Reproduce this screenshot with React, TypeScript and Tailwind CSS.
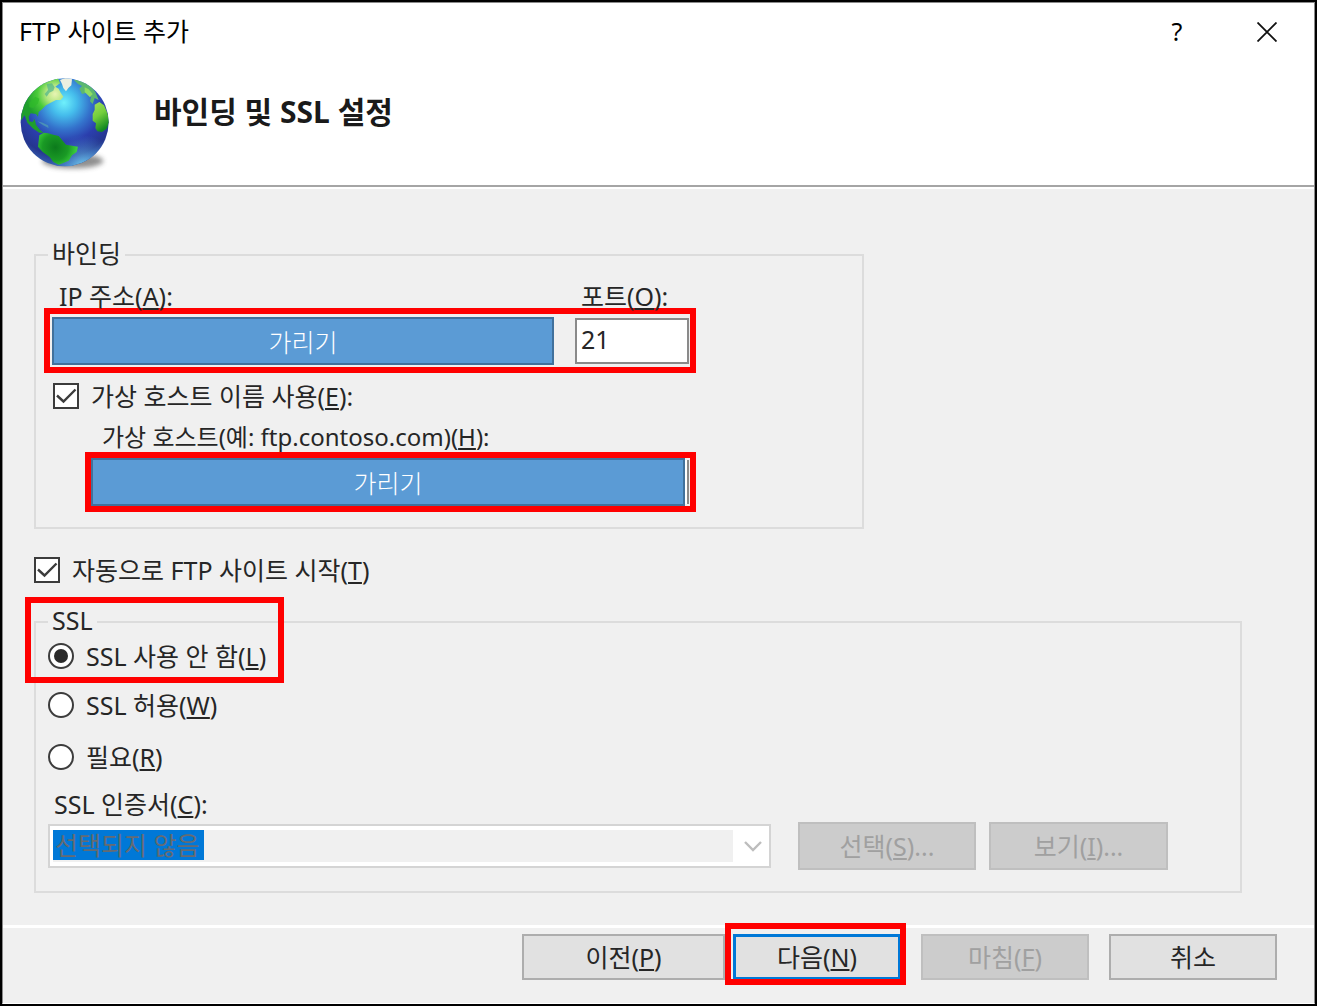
import type { ReactNode } from "react";

const boxShape = "size-[26px] shrink-0 appearance-none border-2 border-[#3c3c3c] bg-white";

function Key({ k }: { k: string }) {
  return (
    <>
      (<span className="underline decoration-2 underline-offset-2">{k}</span>)
    </>
  );
}

function Globe() {
  return (
    <svg viewBox="60 228 276 294" className="h-[98px] w-[92px] shrink-0" aria-hidden="true">
      <defs>
        <radialGradient id="sea" gradientUnits="userSpaceOnUse" cx="192" cy="308" r="190">
          <stop offset="0" stopColor="#6ff0fb" />
          <stop offset="0.2" stopColor="#45bdec" />
          <stop offset="0.42" stopColor="#3473cc" />
          <stop offset="0.62" stopColor="#2b3fae" />
          <stop offset="0.85" stopColor="#25368f" />
          <stop offset="1" stopColor="#3560b0" />
        </radialGradient>
        <radialGradient id="glow" gradientUnits="userSpaceOnUse" cx="250" cy="505" r="100">
          <stop offset="0" stopColor="#7ad8f4" stopOpacity="0.95" />
          <stop offset="1" stopColor="#4a90d8" stopOpacity="0" />
        </radialGradient>
        <radialGradient id="north" gradientUnits="userSpaceOnUse" cx="117" cy="66" r="88">
          <stop offset="0" stopColor="#e8f4b4" />
          <stop offset="0.3" stopColor="#b4e680" />
          <stop offset="0.6" stopColor="#4acb3a" />
          <stop offset="1" stopColor="#1f9e2c" />
        </radialGradient>
        <radialGradient id="south" gradientUnits="userSpaceOnUse" cx="118" cy="226" r="64">
          <stop offset="0" stopColor="#0c7a1c" />
          <stop offset="0.6" stopColor="#1a9a25" />
          <stop offset="1" stopColor="#3ccf3c" />
        </radialGradient>
        <linearGradient id="africa" x1="0" y1="0" x2="0.4" y2="1">
          <stop offset="0" stopColor="#a4e05a" />
          <stop offset="0.5" stopColor="#74cf3c" />
          <stop offset="1" stopColor="#128a22" />
        </linearGradient>
        <clipPath id="disc">
          <circle cx="194" cy="367" r="132" />
        </clipPath>
        <filter id="soft" x="-20%" y="-50%" width="140%" height="200%">
          <feGaussianBlur stdDeviation="8" />
        </filter>
      </defs>
      <ellipse cx="218" cy="483" rx="92" ry="22" fill="#444" opacity="0.6" filter="url(#soft)" />
      <circle cx="194" cy="367" r="132" fill="url(#sea)" />
      <g clipPath="url(#disc)">
        <circle cx="194" cy="367" r="132" fill="url(#glow)" />
        <g transform="translate(48 216)">
          <path
            d="M12 150 L16 100 L46 54 L90 24 L126 18 L132 34 L118 44 L128 50 L134 62 L142 74 L134 84 L120 84 L104 92 L90 100 L78 112 L68 120 L66 134 L60 126 L44 124 L38 134 L40 148 L50 150 L56 140 L60 158 L70 172 L82 182 L70 182 L52 170 L34 152 L26 130 Z"
            fill="url(#north)"
          />
          <path d="M92 36 L108 34 L116 46 L112 56 L100 62 L92 74 L86 66 L96 54 Z" fill="#4fb58c" opacity="0.7" />
          <path d="M40 92 L58 74 L70 80 L66 94 L52 108 L40 106 Z" fill="#2fbb2a" opacity="0.7" />
          <path d="M132 24 L150 17 L168 22 L166 40 L157 48 L150 58 L142 48 L138 36 Z" fill="#ecefe0" />
          <path
            d="M174 24 L196 24 L220 38 L238 60 L248 84 L236 78 L230 96 L222 88 L226 70 L212 62 L198 66 L190 50 L198 42 L186 36 Z"
            fill="#5cb870"
          />
          <path d="M206 46 L218 52 L230 66 L222 76 L206 60 Z" fill="#8fdd62" />
          <path
            d="M236 98 L250 90 L264 100 L274 122 L280 148 L272 170 L258 180 L244 178 L238 168 L240 154 L230 146 L230 126 L236 114 Z"
            fill="url(#africa)"
          />
          <path
            d="M70 190 L84 182 L96 184 L112 188 L128 192 L140 206 L150 218 L186 224 L182 240 L168 250 L158 266 L140 274 L128 278 L112 270 L100 254 L80 240 L66 224 L68 206 Z"
            fill="url(#south)"
          />
          <path d="M64 148 L80 152 L96 160 L98 168 L82 160 Z" fill="#4a90b8" />
        </g>
      </g>
    </svg>
  );
}

function Check({ id, children }: { id: string; children: ReactNode }) {
  return (
    <div className="flex h-[30px] items-center gap-3">
      <span className="relative flex">
        <input id={id} type="checkbox" defaultChecked className={`peer ${boxShape}`} />
        <svg
          viewBox="0 0 26 26"
          className="pointer-events-none absolute inset-0 hidden size-[26px] peer-checked:block"
          fill="none"
          stroke="#3c3c3c"
          strokeWidth="2.4"
        >
          <path d="M4 12.5 L10.5 18.5 L22.5 6.5" />
        </svg>
      </span>
      <label htmlFor={id}>{children}</label>
    </div>
  );
}

function Radio({ id, checked, children }: { id: string; checked?: boolean; children: ReactNode }) {
  return (
    <div className="flex h-[30px] items-center gap-3">
      <input
        id={id}
        name="ssl"
        type="radio"
        defaultChecked={checked}
        className={`${boxShape} grid place-items-center rounded-full checked:before:size-3.5 checked:before:rounded-full checked:before:bg-[#2b2b2b]`}
      />
      <label htmlFor={id}>{children}</label>
    </div>
  );
}

function Cover({ id }: { id: string }) {
  return (
    <input
      id={id}
      readOnly
      value="가리기"
      className="h-12 min-w-0 flex-1 border-2 border-[#41719c] bg-[#5b9bd5] text-center font-light text-white"
    />
  );
}

const buttonTones = {
  normal: "border-2 border-[#adadad] bg-[#e1e1e1]",
  primary: "border-3 border-[#0078d7] bg-[#e1e1e1]",
  disabled: "border-2 border-[#bfbfbf] bg-[#cccccc] text-[#a0a0a0]",
};

function Button({
  className,
  tone = "normal",
  children,
}: {
  className: string;
  tone?: keyof typeof buttonTones;
  children: ReactNode;
}) {
  return (
    <button type="button" disabled={tone === "disabled"} className={`shrink-0 ${buttonTones[tone]} ${className}`}>
      {children}
    </button>
  );
}

export default function App() {
  return (
    <div className="flex min-h-screen flex-col border-2 border-black bg-[#f0f0f0] font-['Noto_Sans','Noto_Sans_CJK_KR',sans-serif] text-[25px] leading-[30px] whitespace-nowrap text-[#262626]">
      <div className="flex flex-1 flex-col border border-[#8a8a8a] border-b-white">
        <header className="border-b-2 border-[#a5a5a5] bg-white">
          <div className="flex h-14 items-center pr-0.5 pl-4">
            <h1 className="flex-1 text-black">FTP 사이트 추가</h1>
            <button type="button" aria-label="도움말" className="w-[90px] text-black">
              ?
            </button>
            <button type="button" aria-label="닫기" className="flex w-[90px] justify-center pt-0.5">
              <svg viewBox="0 0 20 20" className="size-5" fill="none" stroke="#111" strokeWidth="1.8">
                <path d="M0.5 0.5 L19.5 19.5 M19.5 0.5 L0.5 19.5" />
              </svg>
            </button>
          </div>
          <div className="flex gap-[42px] pt-[17px] pb-[11px] pl-[17px]">
            <Globe />
            <h2 className="pt-[18px] text-[30px] leading-[36px] font-bold text-[#1a1a1a]">바인딩 및 SSL 설정</h2>
          </div>
        </header>

        <main className="flex-1 border-t-2 border-white pt-[51px] pr-[72px] pl-[31px]">
          <fieldset className="w-[830px] max-w-full border-2 border-[#dcdcdc] pb-[15px] pl-2">
            <legend className="ml-1 px-1 pb-1 leading-[26px]">바인딩</legend>
            <div className="flex w-[652px] pt-[14px] leading-6">
              <label htmlFor="ip" className="flex-1 pl-[15px]">
                IP 주소
                <Key k="A" />:
              </label>
              <label htmlFor="port" className="w-[115px]">
                포트
                <Key k="O" />:
              </label>
            </div>
            <div className="flex h-[65px] w-[652px] items-center gap-[21px] border-6 border-[#ff0000] pr-px pl-0.5">
              <Cover id="ip" />
              <input
                id="port"
                defaultValue="21"
                className="h-[46px] w-[114px] border-2 border-[#8a8a8a] bg-white pb-1 pl-1"
              />
            </div>
            <div className="mt-2 pl-[9px]">
              <Check id="vhost">
                가상 호스트 이름 사용
                <Key k="E" />:
              </Check>
            </div>
            <label htmlFor="host" className="mt-[11px] block pl-[58px] text-[24px]">
              가상 호스트(예: ftp.contoso.com)
              <Key k="H" />:
            </label>
            <div className="ml-[41px] flex h-[60px] w-[611px] items-center border-6 border-[#ff0000]">
              <Cover id="host" />
              <span className="mr-px h-11 w-[4px] border-r-2 border-[#8a8a8a] bg-white" />
            </div>
          </fieldset>

          <div className="mt-[26px]">
            <Check id="auto">
              자동으로 FTP 사이트 시작
              <Key k="T" />
            </Check>
          </div>

          <div className="relative mt-[22px]">
            <fieldset className="border-2 border-[#dcdcdc] pb-[21px] pl-3">
              <legend className="px-1 pb-1 leading-[26px]">SSL</legend>
              <div className="pt-1">
                <Radio id="none" checked>
                  SSL 사용 안 함
                  <Key k="L" />
                </Radio>
              </div>
              <div className="mt-[19px]">
                <Radio id="allow">
                  SSL 허용
                  <Key k="W" />
                </Radio>
              </div>
              <div className="mt-[22px]">
                <Radio id="require">
                  필요
                  <Key k="R" />
                </Radio>
              </div>
              <label htmlFor="cert" className="mt-[17px] block pl-1.5">
                SSL 인증서
                <Key k="C" />:
              </label>
              <div className="mt-[3px] flex items-center pr-[72px]">
                <div className="flex h-11 flex-1 items-center border-2 border-[#d4d4d4] bg-white pl-[3px]">
                  <div className="flex h-8 flex-1 bg-[#f0f0f0]">
                    <select
                      id="cert"
                      disabled
                      className="h-[30px] w-[151px] appearance-none bg-[#0078d7] pl-0.5 text-[25px] leading-[28px] text-[#666b72] opacity-100"
                    >
                      <option>선택되지 않음</option>
                    </select>
                  </div>
                  <svg viewBox="0 0 36 20" className="h-5 w-9" fill="none" stroke="#bdbdbd" strokeWidth="2.4">
                    <path d="M12 6 L20 14 L28 6" />
                  </svg>
                </div>
                <Button tone="disabled" className="ml-[27px] h-12 w-[178px]">
                  선택
                  <Key k="S" />
                  ...
                </Button>
                <Button tone="disabled" className="ml-[13px] h-12 w-[179px]">
                  보기
                  <Key k="I" />
                  ...
                </Button>
              </div>
            </fieldset>
            <span className="pointer-events-none absolute -top-2.5 -left-[9px] h-[86px] w-[259px] border-6 border-[#ff0000]" />
          </div>
        </main>

        <footer className="flex items-center justify-end border-t-3 border-white pt-1.5 pr-[37px] pb-[23px]">
          <Button className="h-[46px] w-[203px]">
            이전
            <Key k="P" />
          </Button>
          <div className="relative mr-5 ml-2">
            <Button tone="primary" className="h-[46px] w-[168px]">
              다음
              <Key k="N" />
            </Button>
            <span className="pointer-events-none absolute -top-[11px] -right-[5px] -bottom-[5px] -left-2 border-6 border-[#ff0000]" />
          </div>
          <Button tone="disabled" className="h-[46px] w-[168px]">
            마침
            <Key k="F" />
          </Button>
          <Button className="ml-5 h-[46px] w-[168px]">취소</Button>
        </footer>
      </div>
    </div>
  );
}
